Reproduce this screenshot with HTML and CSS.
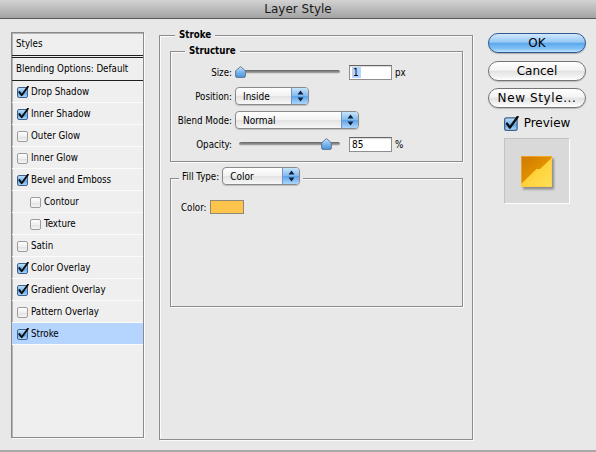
FILE: index.html
```html
<!DOCTYPE html>
<html>
<head>
<meta charset="utf-8">
<link rel="stylesheet" href="styles.css">
</head>
<body>
<svg class="defs" width="0" height="0">
  <defs>
    <linearGradient id="gBlue" x1="0" y1="0" x2="0" y2="1">
      <stop offset="0" stop-color="#c6e2fb"/>
      <stop offset="0.5" stop-color="#74b2ec"/>
      <stop offset="0.55" stop-color="#5ea3e6"/>
      <stop offset="1" stop-color="#b4dcfc"/>
    </linearGradient>
    <linearGradient id="gWhite" x1="0" y1="0" x2="0" y2="1">
      <stop offset="0" stop-color="#ffffff"/>
      <stop offset="0.5" stop-color="#efefef"/>
      <stop offset="0.55" stop-color="#e2e2e2"/>
      <stop offset="1" stop-color="#f7f7f7"/>
    </linearGradient>
    <linearGradient id="gThumb" x1="0" y1="0" x2="0" y2="1">
      <stop offset="0" stop-color="#cfe6fb"/>
      <stop offset="0.5" stop-color="#7cb8ee"/>
      <stop offset="1" stop-color="#4b93dc"/>
    </linearGradient>
    <linearGradient id="gDark" x1="0" y1="0" x2="1" y2="1">
      <stop offset="0" stop-color="#cf7800"/>
      <stop offset="1" stop-color="#f2a600"/>
    </linearGradient>
    <linearGradient id="gLight" x1="0" y1="0" x2="1" y2="1">
      <stop offset="0" stop-color="#ffc21c"/>
      <stop offset="1" stop-color="#ffe15a"/>
    </linearGradient>
    <filter id="blur" x="-20%" y="-20%" width="140%" height="140%">
      <feGaussianBlur stdDeviation="1"/>
    </filter>
    <symbol id="cb-on" viewBox="0 0 12 12">
      <rect x="0.5" y="1.5" width="10" height="10" rx="1.5" fill="url(#gBlue)" stroke="#3f618e"/>
      <path d="M2.4 6.1 L4.7 9.3 L10.9 0.7" fill="none" stroke="#0b0b0b" stroke-width="1.9" stroke-linecap="round" stroke-linejoin="round"/>
    </symbol>
    <symbol id="cb-off" viewBox="0 0 12 12">
      <rect x="0.5" y="1.5" width="10" height="10" rx="1.5" fill="url(#gWhite)" stroke="#9c9c9c"/>
    </symbol>
    <symbol id="thumb" viewBox="0 0 11 12">
      <path d="M5.5 0.6 L10.4 4.8 V10 Q10.4 11.4 9 11.4 H2 Q0.6 11.4 0.6 10 V4.8 Z" fill="url(#gThumb)" stroke="#5a7088" stroke-width="0.9"/>
    </symbol>
    <symbol id="arrows" viewBox="0 0 7 12">
      <path d="M3.5 0.5 L6.5 4.5 H0.5 Z" fill="#10203a"/>
      <path d="M3.5 11.5 L6.5 7.5 H0.5 Z" fill="#10203a"/>
    </symbol>
  </defs>
</svg>

<div class="window">
  <div class="titlebar">Layer Style</div>
  <div class="body">

    <div class="styles-list">
      <div class="list-head">Styles</div>
      <div class="list-blend">Blending Options: Default</div>
      <div class="item"><svg class="cb"><use href="#cb-on"/></svg>Drop Shadow</div>
      <div class="item"><svg class="cb"><use href="#cb-on"/></svg>Inner Shadow</div>
      <div class="item"><svg class="cb"><use href="#cb-off"/></svg>Outer Glow</div>
      <div class="item"><svg class="cb"><use href="#cb-off"/></svg>Inner Glow</div>
      <div class="item"><svg class="cb"><use href="#cb-on"/></svg>Bevel and Emboss</div>
      <div class="item sub"><svg class="cb"><use href="#cb-off"/></svg>Contour</div>
      <div class="item sub"><svg class="cb"><use href="#cb-off"/></svg>Texture</div>
      <div class="item"><svg class="cb"><use href="#cb-off"/></svg>Satin</div>
      <div class="item"><svg class="cb"><use href="#cb-on"/></svg>Color Overlay</div>
      <div class="item"><svg class="cb"><use href="#cb-on"/></svg>Gradient Overlay</div>
      <div class="item"><svg class="cb"><use href="#cb-off"/></svg>Pattern Overlay</div>
      <div class="item selected"><svg class="cb"><use href="#cb-on"/></svg>Stroke</div>
    </div>

    <div class="group outer">
      <div class="legend bold legend-stroke">Stroke</div>

      <div class="group structure">
        <div class="legend bold legend-structure">Structure</div>
        <div class="form">
          <div class="label">Size:</div>
          <div class="ctrl">
            <div class="slider">
              <div class="track"></div>
              <svg class="thumb thumb-size"><use href="#thumb"/></svg>
            </div>
            <div class="field"><span class="sel">1</span></div>
            <span class="unit">px</span>
          </div>

          <div class="label">Position:</div>
          <div class="ctrl">
            <div class="popup popup-pos">
              <span>Inside</span>
              <span class="arrows"><svg class="arr"><use href="#arrows"/></svg></span>
            </div>
          </div>

          <div class="label">Blend Mode:</div>
          <div class="ctrl">
            <div class="popup popup-blend">
              <span>Normal</span>
              <span class="arrows"><svg class="arr"><use href="#arrows"/></svg></span>
            </div>
          </div>

          <div class="label">Opacity:</div>
          <div class="ctrl">
            <div class="slider">
              <div class="track"></div>
              <svg class="thumb thumb-opacity"><use href="#thumb"/></svg>
            </div>
            <div class="field">85</div>
            <span class="unit">%</span>
          </div>
        </div>
      </div>

      <div class="group fill">
        <div class="legend legend-fill">
          <span>Fill Type:</span>
          <div class="popup popup-fill">
            <span>Color</span>
            <span class="arrows"><svg class="arr"><use href="#arrows"/></svg></span>
          </div>
        </div>
        <div class="color-row">
          <span>Color:</span>
          <span class="swatch"></span>
        </div>
      </div>
    </div>

    <div class="side">
      <div class="btn btn-ok">OK</div>
      <div class="btn btn-cancel">Cancel</div>
      <div class="btn btn-new">New Style...</div>
      <div class="preview-check"><svg class="cb-big"><use href="#cb-on"/></svg><span>Preview</span></div>
      <div class="preview-box">
        <svg class="preview-icon" width="36" height="36" viewBox="0 0 36 36">
          <rect x="2" y="2.5" width="31" height="31" fill="rgba(0,0,0,0.35)" filter="url(#blur)"/>
          <rect x="0" y="0" width="31" height="31" fill="url(#gLight)"/>
          <polygon points="0,0 31,0 31,1.5 19,13 15.5,13 0,28" fill="url(#gDark)"/>
          <rect x="0.5" y="0.5" width="30" height="30" fill="none" stroke="#ffc34d" stroke-opacity="0.5"/>
        </svg>
      </div>
    </div>

  </div>
</div>
</body>
</html>
```

FILE: styles.css
```css
body {
  margin: 0;
  background: #e8e8e8;
}

.defs {
  position: absolute;
  width: 0;
  height: 0;
  overflow: hidden;
}

.window {
  width: 596px;
  height: 452px;
  box-sizing: border-box;
  border-bottom: 2px solid #a9a9a9;
  background: #e8e8e8;
  font-family: "DejaVu Sans Condensed", "DejaVu Sans", sans-serif;
  font-stretch: condensed;
  font-size: 9.7px;
  color: #000;
  overflow: hidden;
}

.titlebar {
  height: 18px;
  border-bottom: 1px solid #585858;
  background: linear-gradient(#d3d3d3, #a3a3a3);
  text-align: center;
  font-family: "DejaVu Sans", sans-serif;
  font-stretch: normal;
  font-size: 12px;
  line-height: 19px;
  color: #1a1a1a;
}

.body {
  display: flex;
  align-items: flex-start;
  padding: 13px 0 0 11px;
}

/* ---------- styles list ---------- */
.styles-list {
  width: 133px;
  height: 406px;
  box-sizing: border-box;
  border: 1px solid #8a8a8a;
  background: #efefef;
  box-shadow: inset 1px 1px 0 #b4b4b4, 1px 1px 0 #fbfbfb;
}

.list-head {
  height: 22px;
  line-height: 22px;
  padding-left: 4px;
  border-bottom: 1px solid #1e1e1e;
}

.list-blend {
  margin-top: 1px;
  height: 22px;
  line-height: 22px;
  padding-left: 4px;
  border-top: 1px solid #1e1e1e;
  border-bottom: 1px solid #1e1e1e;
}

.item {
  height: 21px;
  border-bottom: 1px solid #fbfbfb;
  display: flex;
  align-items: center;
  gap: 2px;
  padding-left: 5px;
}

.item.sub {
  padding-left: 18px;
}

.item.selected {
  background: #b5d5fe;
}

.cb {
  width: 12px;
  height: 12px;
  flex: none;
}

/* ---------- groups ---------- */
.group {
  box-sizing: border-box;
  border: 1px solid #8c8c8c;
  box-shadow: inset 1px 1px 0 #fbfbfb, 1px 1px 0 #fbfbfb;
}

.outer {
  margin-top: 3px;
  margin-left: 15px;
  width: 314px;
  height: 405px;
  padding: 0 9px 0 10px;
}

.legend {
  width: fit-content;
  height: 13px;
  line-height: 13px;
  padding: 0 4px;
  margin-top: -8px;
  background: #e8e8e8;
}

.bold {
  font-weight: bold;
}

.legend-stroke {
  margin-left: 5px;
}

.structure {
  margin-top: 10px;
  padding-bottom: 8px;
}

.legend-structure {
  margin-left: 14px;
}

.form {
  margin-top: 6px;
  display: grid;
  grid-template-columns: 61px auto;
  grid-auto-rows: 18px;
  column-gap: 3px;
  row-gap: 6px;
  align-items: center;
}

.label {
  text-align: right;
}

.ctrl {
  display: flex;
  align-items: center;
  height: 18px;
}

.slider {
  position: relative;
  width: 105px;
  height: 18px;
  flex: none;
}

.track {
  position: absolute;
  left: 4px;
  right: 0;
  top: 7px;
  height: 3px;
  border-radius: 2px;
  background: linear-gradient(#626262, #a8a8a8);
  border-bottom: 1px solid #d4d4d4;
}

.thumb {
  position: absolute;
  top: 3px;
  width: 11px;
  height: 12px;
}

.thumb-size {
  left: 0;
}

.thumb-opacity {
  left: 86px;
}

.field {
  margin-left: 9px;
  width: 43px;
  height: 15px;
  box-sizing: border-box;
  border: 1px solid #8e8e8e;
  border-top-color: #666;
  background: #fff;
  box-shadow: inset 0 1px 1px rgba(0, 0, 0, 0.15);
  padding-left: 2px;
  line-height: 13px;
  font-size: 10px;
}

.sel {
  background: #b5d5fe;
  padding: 0 2px 0 1px;
}

.unit {
  margin-left: 3px;
}

.popup {
  height: 18px;
  box-sizing: border-box;
  border: 1px solid #8a8a8a;
  border-radius: 4px;
  background: linear-gradient(#ffffff, #f1f1f1 50%, #e3e3e3 52%, #f7f7f7);
  box-shadow: 0 1px 1px rgba(0, 0, 0, 0.18);
  padding-left: 7px;
  display: flex;
  align-items: center;
  justify-content: space-between;
  overflow: hidden;
  font-size: 10px;
}

.popup-pos {
  width: 74px;
}

.popup-blend {
  width: 124px;
}

.popup-fill {
  width: 78px;
}

.arrows {
  width: 17px;
  height: 100%;
  box-sizing: border-box;
  border-left: 1px solid #7295c2;
  background: linear-gradient(#c8e3fb, #80baef 50%, #5fa4e8 52%, #acd6fb);
  display: flex;
  align-items: center;
  justify-content: center;
}

.arr {
  width: 7px;
  height: 12px;
}

.fill {
  margin-top: 16px;
  height: 129px;
}

.legend-fill {
  height: 18px;
  margin-top: -12px;
  margin-left: 8px;
  padding: 0 3px;
  display: flex;
  align-items: center;
  gap: 3px;
}

.color-row {
  margin-top: 15px;
  padding-left: 10px;
  height: 14px;
  display: flex;
  align-items: center;
  gap: 3px;
}

.swatch {
  width: 34px;
  height: 14px;
  box-sizing: border-box;
  border: 1px solid #908878;
  background: #ffc44c;
}

/* ---------- right side ---------- */
.side {
  margin-top: 1px;
  margin-left: 15px;
  width: 98px;
  display: flex;
  flex-direction: column;
  align-items: center;
  font-family: "DejaVu Sans", sans-serif;
  font-stretch: normal;
  font-size: 12px;
}

.btn {
  width: 98px;
  height: 20px;
  box-sizing: border-box;
  border-radius: 10px;
  text-align: center;
  line-height: 18px;
  color: #000;
  margin-bottom: 7px;
}

.btn-ok {
  margin-bottom: 8px;
  border: 1px solid #2d5891;
  background: linear-gradient(#d2e8fc, #95c8f4 45%, #5da8ee 52%, #7fc0f5 80%, #c0e3ff);
  box-shadow: 0 1px 1px rgba(0, 0, 0, 0.25);
}

.btn-cancel,
.btn-new {
  border: 1px solid #757575;
  background: linear-gradient(#ffffff, #f3f3f3 45%, #e3e3e3 52%, #f1f1f1 80%, #ffffff);
  box-shadow: 0 1px 1px rgba(0, 0, 0, 0.2);
}

.btn-new {
  letter-spacing: 0.6px;
}

.preview-check {
  height: 16px;
  display: flex;
  align-items: center;
  gap: 5px;
}

.cb-big {
  width: 15px;
  height: 15px;
}

.preview-box {
  margin-top: 7px;
  width: 66px;
  height: 66px;
  box-sizing: border-box;
  border: 1px solid;
  border-color: #c2c2c2 #fdfdfd #fdfdfd #c2c2c2;
  background: #d9d9d9;
  padding: 17px 0 0 16px;
}

.preview-icon {
  display: block;
}
```
